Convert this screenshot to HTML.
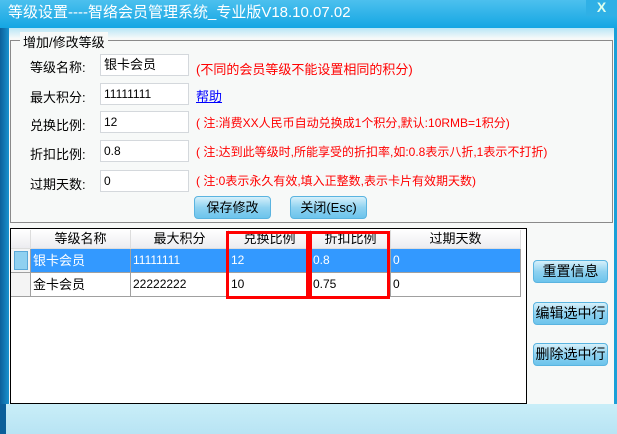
<!DOCTYPE html>
<html><head><meta charset="utf-8"><style>
*{margin:0;padding:0;box-sizing:border-box}
body{width:617px;height:434px;overflow:hidden;position:relative;background:#f7f9f8;font-family:"Liberation Sans","Noto Sans CJK SC",sans-serif;font-size:13px;color:#000}
.a{position:absolute}
#title{left:0;top:0;width:617px;height:28px;background:linear-gradient(#4cc0ee,#14a6e3);color:#fff;font-size:15px;line-height:26px;padding-left:8px}
#band{left:0;top:28px;width:617px;height:10px;background:linear-gradient(#b9e6f6,#f4f9f9)}
#ledge{left:0;top:28px;width:9px;height:406px;background:linear-gradient(90deg,#0b5f9a,#1992cf)}
#bottom{left:0;top:404px;width:617px;height:30px;background:linear-gradient(#c9eef8,#b8e4f4)}
.grp{left:10px;top:40px;width:603px;height:183px;border:1px solid #8a8a8a}
.leg{left:20px;top:32px;background:#f7f9f8;padding:0 3px;font-size:13px}
.lbl{left:30px;font-size:13px}
.inp{left:100px;width:89px;height:22px;background:#fff;border:1px solid #d4d8dc;padding-left:3px;line-height:20px}
.note{left:196px;color:#f00;font-size:12px}
.btn{height:23px;border:1px solid #5ab4e0;border-radius:4px;background:linear-gradient(#d6f0fb,#8fd2f0 50%,#6cc4ec);text-align:center;line-height:21px;font-size:13px}
#grid{left:10px;top:228px;width:517px;height:176px;background:#fff;border:1px solid #000}
.cell{position:absolute;height:24px;line-height:23px;padding-left:2px;border-right:1px solid #a0a0a0;border-bottom:1px solid #a0a0a0;font-size:13px;overflow:hidden;white-space:nowrap}
.hd{height:19px;line-height:18px;background:linear-gradient(#fff,#ececf0);text-align:center;padding:0;border-color:#ddd}
.sel{background:#3399ff;color:#fff}
.red{border:3px solid #f00;position:absolute}
</style></head><body>
<div class="a" id="title">等级设置----智络会员管理系统_专业版V18.10.07.02</div>
<div class="a" style="left:586px;top:0;width:31px;height:16px;background:#2fb0e6;color:#dfe;font-weight:bold;font-size:14px;text-align:center;line-height:14px">X</div>
<div class="a" id="band"></div>
<div class="a" id="ledge"></div>
<div class="a" style="left:614px;top:28px;width:3px;height:380px;background:#1aa0d8"></div>
<div class="a grp"></div>
<div class="a leg">增加/修改等级</div>

<div class="a lbl" style="top:57px">等级名称:</div>
<div class="a inp" style="top:54px">银卡会员</div>
<div class="a note" style="top:59px;font-size:13px">(不同的会员等级不能设置相同的积分)</div>

<div class="a lbl" style="top:87px">最大积分:</div>
<div class="a inp" style="top:83px;font-size:12px">11111111</div>
<div class="a" style="left:196px;top:86px;color:#00f;text-decoration:underline">帮助</div>

<div class="a lbl" style="top:115px">兑换比例:</div>
<div class="a inp" style="top:111px;font-size:12px">12</div>
<div class="a note" style="top:114px">( 注:消费XX人民币自动兑换成1个积分,默认:10RMB=1积分)</div>

<div class="a lbl" style="top:144px">折扣比例:</div>
<div class="a inp" style="top:140px;font-size:12px">0.8</div>
<div class="a note" style="top:143px">( 注:达到此等级时,所能享受的折扣率,如:0.8表示八折,1表示不打折)</div>

<div class="a lbl" style="top:174px">过期天数:</div>
<div class="a inp" style="top:170px;font-size:12px">0</div>
<div class="a note" style="top:172px">( 注:0表示永久有效,填入正整数,表示卡片有效期天数)</div>

<div class="a btn" style="left:194px;top:196px;width:77px">保存修改</div>
<div class="a btn" style="left:290px;top:196px;width:77px">关闭(Esc)</div>

<div class="a" id="grid">
<div class="cell hd" style="left:0;top:1px;width:20px"></div>
<div class="cell hd" style="left:20px;top:1px;width:100px">等级名称</div>
<div class="cell hd" style="left:120px;top:1px;width:98px">最大积分</div>
<div class="cell hd" style="left:218px;top:1px;width:82px">兑换比例</div>
<div class="cell hd" style="left:300px;top:1px;width:80px">折扣比例</div>
<div class="cell hd" style="left:380px;top:1px;width:130px">过期天数</div>
<div class="cell" style="left:0;top:20px;width:20px;background:#f4f4f4"><div style="margin:2px 0 0 1px;width:14px;height:19px;background:#8fd0f0;border:1px solid #5aa8d8"></div></div>
<div class="cell sel" style="left:20px;top:20px;width:100px">银卡会员</div>
<div class="cell sel" style="left:120px;top:20px;width:98px;font-size:12px">11111111</div>
<div class="cell sel" style="left:218px;top:20px;width:82px;font-size:12px">12</div>
<div class="cell sel" style="left:300px;top:20px;width:80px;font-size:12px">0.8</div>
<div class="cell sel" style="left:380px;top:20px;width:130px;font-size:12px">0</div>
<div class="cell" style="left:0;top:44px;width:20px;background:#f4f4f4"></div>
<div class="cell" style="left:20px;top:44px;width:100px">金卡会员</div>
<div class="cell" style="left:120px;top:44px;width:98px;font-size:12px">22222222</div>
<div class="cell" style="left:218px;top:44px;width:82px;font-size:12px">10</div>
<div class="cell" style="left:300px;top:44px;width:80px;font-size:12px">0.75</div>
<div class="cell" style="left:380px;top:44px;width:130px;font-size:12px">0</div>
</div>
<div class="red" style="left:226px;top:231px;width:83px;height:68px"></div>
<div class="red" style="left:309px;top:231px;width:81px;height:68px"></div>

<div class="a btn" style="left:533px;top:260px;width:75px;font-size:14px">重置信息</div>
<div class="a btn" style="left:533px;top:302px;width:75px;font-size:14px">编辑选中行</div>
<div class="a btn" style="left:533px;top:343px;width:75px;font-size:14px">删除选中行</div>
<div class="a" id="bottom"></div>
<div class="a" style="left:0;top:404px;width:6px;height:30px;background:#0b5f9a"></div>
</body></html>
